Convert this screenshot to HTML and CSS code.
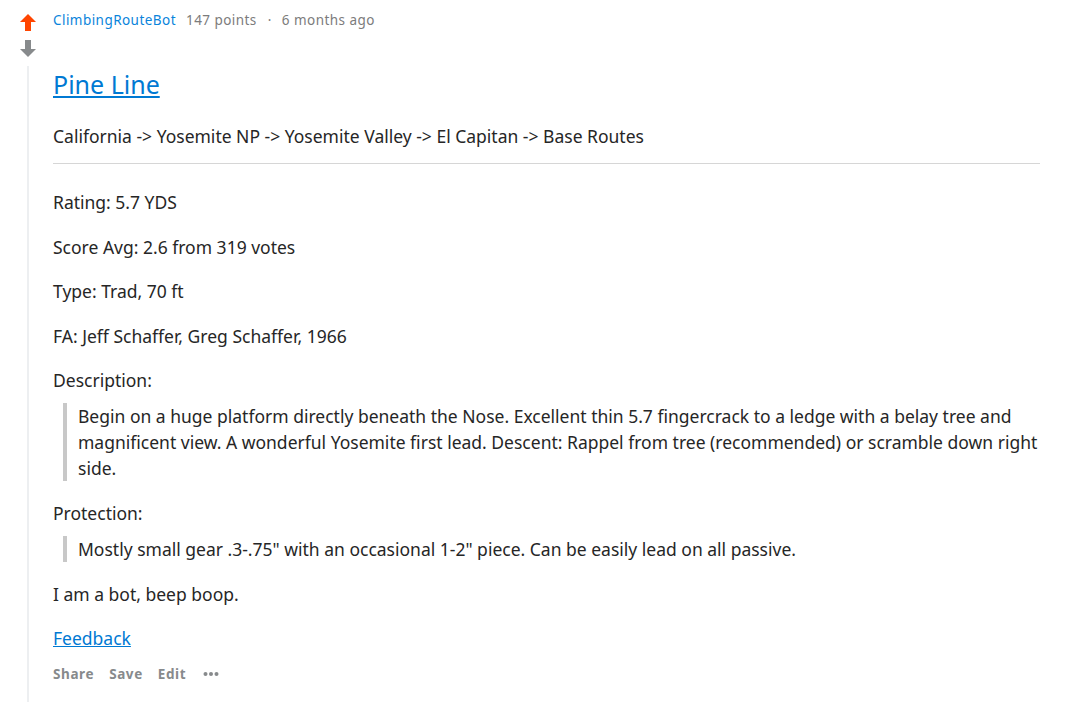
FILE: index.html
```html
<!DOCTYPE html>
<html lang="en">
<head>
<meta charset="utf-8">
<title>Pine Line</title>
<link rel="stylesheet" href="styles.css">
</head>
<body>
<div class="comment">
  <div class="gutter">
    <button class="vote up" aria-label="upvote">
      <svg width="16" height="17" viewBox="0 0 16 17"><path d="M8 0 L16 8 L11 8 L11 17 L5 17 L5 8 L0 8 Z" fill="#ff4500"/></svg>
    </button>
    <button class="vote down" aria-label="downvote">
      <svg width="16" height="17" viewBox="0 0 16 17"><path d="M5 0 L11 0 L11 9 L16 9 L8 17 L0 9 L5 9 Z" fill="#878a8c"/></svg>
    </button>
    <div class="thread"></div>
  </div>
  <div class="content">
    <div class="meta">
      <a class="author" href="#">ClimbingRouteBot</a>
      <span class="points">147 points</span>
      <span class="dot">·</span>
      <span class="time">6 months ago</span>
    </div>
    <div class="body">
      <h2 class="title"><a href="#">Pine Line</a></h2>
      <p class="crumbs">California -&gt; Yosemite NP -&gt; Yosemite Valley -&gt; El Capitan -&gt; Base Routes</p>
      <hr class="rule">
      <p>Rating: 5.7 YDS</p>
      <p>Score Avg: 2.6 from 319 votes</p>
      <p>Type: Trad, 70 ft</p>
      <p>FA: Jeff Schaffer, Greg Schaffer, 1966</p>
      <p class="label">Description:</p>
      <blockquote>Begin on a huge platform directly beneath the Nose. Excellent thin 5.7 fingercrack to a ledge with a belay tree and magnificent view. A wonderful Yosemite first lead. Descent: Rappel from tree (recommended) or scramble down right side.</blockquote>
      <p class="label">Protection:</p>
      <blockquote>Mostly small gear .3-.75" with an occasional 1-2" piece. Can be easily lead on all passive.</blockquote>
      <p>I am a bot, beep boop.</p>
      <p class="last"><a href="#">Feedback</a></p>
    </div>
    <div class="actions">
      <span>Share</span>
      <span>Save</span>
      <span>Edit</span>
      <span class="more" aria-label="more"><svg width="16" height="6" viewBox="0 0 16 6"><circle cx="2.5" cy="3" r="2" fill="#878a8c"/><circle cx="8" cy="3" r="2" fill="#878a8c"/><circle cx="13.5" cy="3" r="2" fill="#878a8c"/></svg></span>
    </div>
  </div>
</div>
</body>
</html>
```

FILE: styles.css
```css
* { box-sizing: border-box; }

html, body {
  margin: 0;
  padding: 0;
  background: #ffffff;
}

body {
  font-family: "Noto Sans", "Open Sans", sans-serif;
  color: #262626;
  height: 702px;
  overflow: hidden;
}

.comment {
  display: flex;
  min-height: 702px;
}

.gutter {
  width: 53px;
  flex: none;
  display: flex;
  flex-direction: column;
  align-items: flex-start;
  padding-left: 20px;
}

.vote {
  border: 0;
  background: none;
  padding: 0;
  margin: 0;
  width: 16px;
  height: 17px;
  display: block;
  cursor: pointer;
}

.vote svg { display: block; }

.up { margin-top: 14px; }
.down { margin-top: 9px; }

.thread {
  width: 2px;
  margin-left: 7px;
  margin-top: 9px;
  flex: 1;
  background: #edeff1;
}

.content {
  flex: 1;
  padding-right: 31px;
}

.meta {
  margin-top: 8px;
  height: 24px;
  display: flex;
  align-items: center;
  font-size: 13.5px;
  letter-spacing: 0.45px;
  color: #7c7c7c;
}

.author {
  color: #0a84db;
  text-decoration: none;
  margin-right: 10px;
}

.dot { margin: 0 10px 0 11px; }

.title {
  margin: 36px 0 0;
  font-size: 25px;
  line-height: 32px;
  font-weight: 400;
}

.title a, .body a {
  color: #0079d3;
  text-decoration: underline;
}

.body p {
  margin: 0 0 18.25px;
  font-size: 17.5px;
  line-height: 26.25px;
}

.body .crumbs { margin: 23px 0 0; }

.rule {
  border: 0;
  height: 1px;
  background: #d6d6d6;
  margin: 14px 0 25px;
}

.body .label { margin-bottom: 9px; }

blockquote {
  margin: 0 0 19px 10px;
  padding: 0 0 0 11px;
  border-left: 4px solid #c8c8c8;
  font-size: 17.5px;
  line-height: 26.25px;
}

.body .last { margin-bottom: 10px; }

.actions {
  display: flex;
  align-items: center;
  gap: 15px;
  font-size: 13.5px;
  letter-spacing: 0.6px;
  font-weight: 700;
  line-height: 24px;
  color: #878a8c;
}

.more { display: flex; align-items: center; margin-left: 2px; }
.more svg { display: block; }
```
